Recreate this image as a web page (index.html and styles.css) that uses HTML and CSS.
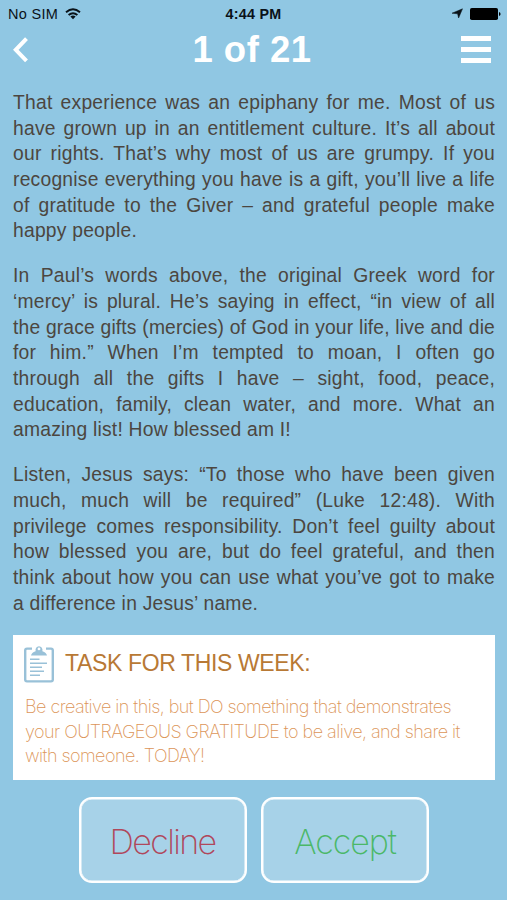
FILE: index.html
```html
<!DOCTYPE html>
<html lang="en">
<head>
<meta charset="utf-8">
<title>1 of 21</title>
<link rel="stylesheet" href="styles.css">
</head>
<body>
<div class="status">
  <div class="carrier"><span>No SIM</span>
    <svg width="16" height="12" viewBox="0 0 16 12" fill="none" stroke="#0a1218" stroke-width="1.9"><path d="M1 4.2Q8-1.7 15 4.2M3.6 7Q8 3.3 12.4 7"/><path d="M5.4 8.4Q8 6.4 10.6 8.4L8 11.2Z" fill="#0a1218" stroke="none"/></svg>
  </div>
  <div class="time">4:44 PM</div>
  <div class="power">
    <svg width="11" height="11" viewBox="0 0 11 11"><path d="M0 5.2 10.5.8 6.6 10 5.6 5.8Z" fill="#0a1218" stroke="#0a1218" stroke-width=".5"/></svg>
    <svg width="31" height="12" viewBox="0 0 31 12"><rect width="28" height="12" rx="1.8" fill="#000"/><path d="M29 4Q30.6 4.4 30.6 6T29 8Z" fill="#000"/></svg>
  </div>
</div>
<header class="header">
  <svg width="16" height="26" viewBox="0 0 16 26" fill="none" stroke="#fff" stroke-width="4"><path d="M13.5 1.7 2.8 12.8 13.5 23.9"/></svg>
  <h1 class="title">1 of 21</h1>
  <div class="menu"><i></i><i></i><i></i></div>
</header>
<main class="content">
  <p class="para">
    <span>That experience was an epiphany for me. Most of us</span>
    <span>have grown up in an entitlement culture. It’s all about</span>
    <span>our rights. That’s why most of us are grumpy. If you</span>
    <span>recognise everything you have is a gift, you’ll live a life</span>
    <span>of gratitude to the Giver – and grateful people make</span>
    <span>happy people.</span>
  </p>
  <p class="para">
    <span>In Paul’s words above, the original Greek word for</span>
    <span>‘mercy’ is plural. He’s saying in effect, “in view of all</span>
    <span class="tight">the grace gifts (mercies) of God in your life, live and die</span>
    <span>for him.” When I’m tempted to moan, I often go</span>
    <span>through all the gifts I have – sight, food, peace,</span>
    <span>education, family, clean water, and more. What an</span>
    <span>amazing list! How blessed am I!</span>
  </p>
  <p class="para">
    <span>Listen, Jesus says: “To those who have been given</span>
    <span>much, much will be required” (Luke 12:48). With</span>
    <span>privilege comes responsibility. Don’t feel guilty about</span>
    <span>how blessed you are, but do feel grateful, and then</span>
    <span>think about how you can use what you’ve got to make</span>
    <span>a difference in Jesus’ name.</span>
  </p>
  <section class="task">
    <div class="task-head">
      <svg width="30" height="38" viewBox="0 0 30 38" fill="none" stroke="#99c1d8" stroke-width="2.4"><path d="M8 3.6H3Q1.2 3.6 1.2 5.5V34.6Q1.2 36.4 3 36.4H27Q28.8 36.4 28.8 34.6V5.5Q28.8 3.6 27 3.6H22"/><path d="M7 10.5Q7.5 7.5 11.6 6.2V4A3.5 3.5 0 0 1 18.4 4V6.2Q22.5 7.5 23 10.5ZM15 2.5A1.4 1.4 0 1 0 15 5.3 1.4 1.4 0 1 0 15 2.5Z" fill="#99c1d8" fill-rule="evenodd" stroke="none"/><path d="M6 14.3H15.5M6 18.2H23M6 22.2H18M6 26.2H20M6 30.2H16" stroke-width="1.5"/></svg>
      <h2>TASK FOR THIS WEEK:</h2>
    </div>
    <p class="task-text">
      <span>Be creative in this, but DO something that demonstrates</span>
      <span>your OUTRAGEOUS GRATITUDE to be alive, and share it</span>
      <span>with someone. TODAY!</span>
    </p>
  </section>
</main>
<div class="actions">
  <button class="btn decline">Decline</button>
  <button class="btn accept">Accept</button>
</div>
</body>
</html>
```
FILE: styles.css
```css
* { box-sizing: border-box; }
body {
  margin: 0;
  width: 507px;
  height: 900px;
  overflow: hidden;
  background: #90c7e3;
  font-family: "Liberation Sans", Arial, sans-serif;
}
svg { display: block; flex: none; }
.status {
  display: grid;
  grid-template-columns: 1fr auto 1fr;
  align-items: center;
  height: 27px;
  padding: 0 6px 0 8px;
  font-size: 14.5px;
  color: #0a1218;
}
.carrier { display: flex; align-items: center; gap: 7px; }
.carrier span { letter-spacing: .3px; }
.time { font-weight: bold; font-size: 14.3px; letter-spacing: .25px; margin-right: 2px; }
.power { display: flex; justify-content: flex-end; align-items: center; gap: 7px; }
.header {
  display: flex;
  justify-content: space-between;
  align-items: center;
  height: 45px;
  padding: 0 16px 0 13px;
}
.title {
  margin: 0 0 0 14px;
  font-size: 36.5px;
  line-height: 44px;
  letter-spacing: .5px;
  color: #fff;
}
.menu { display: flex; flex-direction: column; gap: 6px; width: 30px; }
.menu i { height: 5px; background: #fff; }
.content { padding: 18px 12px 0 13px; }
.para {
  margin: 0 0 19.4px;
  font-size: 19.3px;
  line-height: 25.65px;
  letter-spacing: .22px;
  color: #4c4640;
}
.para:nth-child(3) { margin-bottom: 18.8px; }
.para span { display: block; white-space: nowrap; text-align: justify; text-align-last: justify; }
.para span:last-child { text-align-last: left; }
.para .tight { letter-spacing: .15px; }
.task {
  height: 145px;
  padding: 10px 11px;
  background: #fff;
}
.task-head { display: flex; align-items: center; gap: 11px; height: 38px; }
h2 {
  margin: 0;
  font-weight: normal;
  font-size: 23px;
  line-height: 26px;
  padding-bottom: 2px;
  letter-spacing: -.36px;
  color: #b87935;
  white-space: nowrap;
}
.task-text {
  margin: 12px 0 0 1px;
  font-family: Inter, "Liberation Sans", sans-serif;
  font-weight: 200;
  font-size: 18px;
  line-height: 24.5px;
  letter-spacing: -.54px;
  color: #dc9558;
  white-space: nowrap;
}
.task-text span { display: block; }
.actions { display: flex; gap: 14.5px; padding: 17px 0 0 78.5px; }
.btn {
  width: 168px;
  height: 86px;
  padding: 3px 0 0;
  border: 2.5px solid #fff;
  border-radius: 13px;
  background: #a7d2e8;
  box-shadow: inset 0 0 0 .5px #fff;
  font-family: Inter, "Liberation Sans", sans-serif;
  font-weight: 200;
  font-size: 34px;
  letter-spacing: -1.6px;
}
.decline { color: #b0475b; }
.accept { color: #4bb868; letter-spacing: -1.1px; }
```
